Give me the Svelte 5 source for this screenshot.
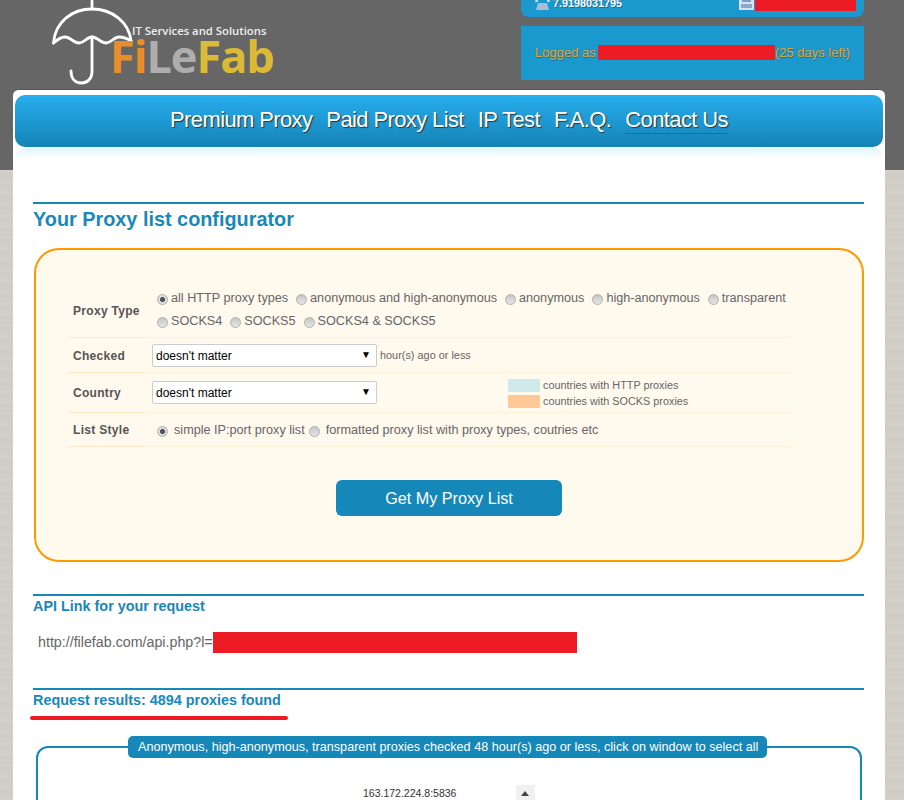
<script>
  const navItems = ['Premium Proxy', 'Paid Proxy List', 'IP Test', 'F.A.Q.', 'Contact Us'];
  const proxyLines = [
    [
      { label: 'all HTTP proxy types', checked: true },
      { label: 'anonymous and high-anonymous' },
      { label: 'anonymous' },
      { label: 'high-anonymous' },
      { label: 'transparent' }
    ],
    [{ label: 'SOCKS4' }, { label: 'SOCKS5' }, { label: 'SOCKS4 & SOCKS5' }]
  ];
</script>

<div class="page">
  <header class="top">
    <div class="logo">
      <svg class="umbrella" width="82" height="86" viewBox="0 0 82 86" fill="none" stroke="#fff" stroke-width="2.8" stroke-linecap="round" stroke-linejoin="round">
        <path d="M40 1v7" />
        <path d="M1.500 43C3 22 20 9 40 9c20 0 37 13 39 32" />
        <path d="M1.500 43C6 39 9 37 13 37c5 0 9 6 14 6 5 0 8-6 13-6 5 0 9 6 14 6 5 0 8-6 13-6 5 0 9 2 12 4" />
        <path d="M40 37v35c0 7-5 11-10.500 11-6 0-10.500-4-10.500-12" />
      </svg>
      <span class="tagline">IT Services and Solutions</span>
      <span class="brand"><span class="o">Fi</span><span class="g">Le</span><span class="y">Fab</span></span>
    </div>
    <div class="side">
      <div class="contact">
        <span class="phone">
          <svg width="15" height="12" viewBox="0 0 15 12"><path d="M1 0h13l1 4h-3V2H3v2H0z" fill="#c9d7ea" /><path d="M3 5h9l2 7H1z" fill="#a9bcd8" /></svg>
          7.9198031795
        </span>
        <span class="mail">
          <svg width="15" height="12" viewBox="0 0 15 12"><rect width="15" height="12" fill="#d5e3f2" /><rect x="3" y="0" width="9" height="4" fill="#7f9cc4" /><rect x="2" y="6" width="11" height="4" fill="#8fa9cc" /></svg>
          <span class="redact mailbar"></span>
        </span>
      </div>
      <div class="logged">Logged as <span class="redact userbar"></span>(25 days left)</div>
    </div>
  </header>

  <main class="sheet">
    <nav>
      {#each navItems as item}
        <a href="#top" class:hover={item === 'Contact Us'}>{item}</a>
      {/each}
    </nav>
    <div class="glow"></div>

    <section class="content">
      <h1>Your Proxy list configurator</h1>

      <form class="config" on:submit|preventDefault>
        <div class="row type">
          <div class="label">Proxy Type</div>
          <div class="field radios">
            {#each proxyLines as line}
              <div class="line">
                {#each line as t}
                  <label><input type="radio" name="type" checked={t.checked} />{t.label}</label>
                {/each}
              </div>
            {/each}
          </div>
        </div>
        <div class="row checked">
          <div class="label">Checked</div>
          <div class="field">
            <span class="select"><select><option>doesn't matter</option></select></span>
            <span class="hint">hour(s) ago or less</span>
          </div>
        </div>
        <div class="row country">
          <div class="label">Country</div>
          <div class="field">
            <span class="select"><select><option>doesn't matter</option></select></span>
            <div class="legend">
              <div><i class="http"></i>countries with HTTP proxies</div>
              <div><i class="socks"></i>countries with SOCKS proxies</div>
            </div>
          </div>
        </div>
        <div class="row style">
          <div class="label">List Style</div>
          <div class="field radios">
            <div class="line tight">
              <label class="wide"><input type="radio" name="style" checked />simple IP:port proxy list</label>
              <label class="wide"><input type="radio" name="style" />formatted proxy list with proxy types, coutries etc</label>
            </div>
          </div>
        </div>
        <button type="submit">Get My Proxy List</button>
      </form>

      <h2 class="api-title">API Link for your request</h2>
      <p class="api">http://filefab.com/api.php?l=<span class="redact apibar"></span></p>

      <h2 class="results">Request results: 4894 proxies found</h2>
      <div class="scribble"></div>

      <fieldset>
        <legend>Anonymous, high-anonymous, transparent proxies checked 48 hour(s) ago or less, click on window to select all</legend>
        <div class="list">
          <span>163.172.224.8:5836</span>
          <div class="scroll-up"></div>
        </div>
      </fieldset>
    </section>
  </main>
</div>

<style>
  :global(body) { margin: 0; background: #fff; }
  .page {
    height: 800px;
    overflow: hidden;
    font-family: "Liberation Sans", Arial, sans-serif;
    color: #666;
    background:
      linear-gradient(#666, #666) top / 100% 170px no-repeat,
      repeating-linear-gradient(0deg, rgba(255,255,255,.05) 0 3px, transparent 3px 7px, rgba(0,0,0,.012) 7px 11px),
      #d0cec6;
  }

  .top { display: flex; justify-content: space-between; height: 89px; padding: 0 40px 0 52px; }
  .logo { position: relative; width: 240px; }
  .umbrella { position: absolute; left: 0; top: 0; }
  .tagline { position: absolute; left: 80px; top: 24px; font-size: 11.3px; line-height: 14px; color: #eee; white-space: nowrap; font-family: "Open Sans", sans-serif; font-weight: 600; }
  .brand { position: absolute; left: 58px; top: 38px; font: 700 45px/36px "Open Sans", sans-serif; letter-spacing: -1px; white-space: nowrap; }
  .o { color: #e78e2b; }
  .g { color: #aeaeae; }
  .y { color: #dbba36; }

  .side { width: 343px; }
  .contact { display: flex; height: 17px; background: #1a99cf; border-radius: 0 0 8px 8px; padding: 0 8px 0 14px; color: #fff; font-size: 10.8px; font-weight: 700; overflow: hidden; text-shadow: 1px 1px 0 rgba(30,60,90,.5); }
  .contact > span { display: flex; align-items: flex-start; gap: 3px; margin-top: -4px; height: 16px; line-height: 14px; }
  .phone { width: 204px; }
  .phone svg, .mail svg { flex: none; margin-top: 2px; }
  .mailbar { display: block; width: 101px; height: 15px; margin-left: -2px; }
  .logged { height: 54px; margin-top: 9px; background: #1a99cf; padding: 0 14px 2px; box-sizing: border-box; font-size: 13px; color: #e2a52e; text-shadow: 1px 1px 0 rgba(60,60,60,.55); white-space: nowrap; display: flex; align-items: center; }
  .redact { background: #ed1c24; }
  .userbar { display: block; width: 180px; height: 15px; margin-left: 2px; }

  .sheet { width: 872px; margin-left: 13px; background: #fff; border-radius: 6px 6px 0 0; padding-top: 5px; border-top: 1px solid #555; box-sizing: border-box; }
  nav {
    display: flex; justify-content: center; gap: 14px;
    width: 868px; height: 52px; margin: 0 2px; box-sizing: border-box;
    padding-top: 12px;
    border-radius: 10px;
    background: linear-gradient(#28aeee, #1483b6);
  }
  nav a { font-size: 22px; line-height: 26px; height: 26px; color: #fff; text-decoration: none; letter-spacing: -.62px; text-shadow: 1px 1px 1px #333; }
  nav a.hover { border-bottom: 1px solid rgba(20,80,120,.5); }
  .glow { height: 11px; margin: 1px 2px 0; border-radius: 10px 10px 0 0; background: linear-gradient(#e0f5fd, #fff); }

  .content { padding: 43px 21px 0 20px; }
  h1 { margin: 0; border-top: 2px solid #1587b8; padding-top: 3px; font-size: 19.85px; line-height: 24px; color: #1a87b9; }
  .config { margin: 17px 0 0 1px; height: 314px; box-sizing: border-box; border: 2px solid #f90; border-radius: 25px; background: #fff9ee; padding: 39px 70px 0 32px; }
  .row { display: flex; font-size: 12px; }
  .label { width: 77px; flex: none; padding-left: 5px; box-sizing: border-box; margin-right: 2px; border-bottom: 1px solid #ffe9c6; font-weight: 700; letter-spacing: .3px; color: #555; display: flex; align-items: center; }
  .type .label { padding-bottom: 4px; }
  .checked .label, .country .label, .style .label { padding-top: 1px; }
  .field { flex: 1; border-bottom: 1px dotted #ffe9c6; display: flex; align-items: center; position: relative; padding-left: 5px; }
  .type { height: 49px; }
  .checked { height: 35px; }
  .country { height: 40px; }
  .style { height: 34px; }
  .radios { flex-direction: column; align-items: flex-start; justify-content: center; gap: 6px; padding-left: 10px; }
  .type .radios { padding-bottom: 6px; }
  .style .radios { padding-top: 1px; }
  .line { display: flex; gap: 8px; white-space: nowrap; }
  .line.tight { gap: 4px; }
  label { font-size: 12.65px; line-height: 17px; display: inline-flex; align-items: center; white-space: nowrap; }
  input[type=radio] {
    appearance: none; width: 11px; height: 11px; margin: 2px 3px 0 0; border-radius: 50%;
    border: 1px solid #b0b0b0; box-sizing: border-box;
    background: linear-gradient(#c6c6c6, #e6e6e6);
  }
  input[type=radio]:checked { background: radial-gradient(circle, #555 0 2.2px, #ddd 2.8px); }
  .wide input { margin-right: 6px; }
  .select { position: relative; display: block; width: 225px; height: 23px; }
  .select::after { content: "▼"; position: absolute; right: 6px; top: 5px; font-size: 10px; color: #000; pointer-events: none; }
  select { appearance: none; width: 100%; height: 100%; background: #fff; border: 1px solid #ccc; border-radius: 2px; padding: 1px 3px 0; font: 12px "Liberation Sans", sans-serif; color: #000; }
  .hint { font-size: 10.9px; margin-left: 3px; }
  .legend { position: absolute; left: 361px; top: 4px; font-size: 10.85px; }
  .legend div { display: flex; align-items: center; height: 16px; }
  .legend i { width: 32px; height: 13px; margin-right: 3px; }
  .http { background: #cfeae8; }
  .socks { background: #ffc896; }
  button { display: block; width: 226px; height: 36px; margin: 33px 0 0 268px; border: 0; border-radius: 6px; background: #1587b8; color: #fff; font: 16.2px "Liberation Sans", sans-serif; }

  h2 { margin: 0; border-top: 2px solid #1587b8; font-size: 14.4px; line-height: 18px; color: #1a87b9; }
  h2.api-title { margin-top: 32px; padding-top: 1px; }
  .api { margin: 17px 0 0 5px; font-size: 14.25px; line-height: 21px; height: 21px; display: flex; }
  .apibar { display: block; width: 364px; height: 21px; }
  h2.results { margin-top: 35px; padding-top: 1px; }
  .scribble { width: 258px; height: 4px; margin: 7px 0 0 -3px; border-radius: 2px; background: #ed1c24; }
  fieldset { margin: 16px 0 0 3px; width: 826px; height: 120px; box-sizing: border-box; border: 2px solid #1587b8; border-radius: 12px; padding: 0; }
  legend { margin: 0 0 0 90px; padding: 0 9px 0 10px; height: 22px; line-height: 22px; border-radius: 5px; background: #1587b8; color: #fff; font-size: 12.64px; white-space: nowrap; }
  .list { display: flex; padding: 28px 0 0 325px; font-size: 10.5px; color: #333; line-height: 14px; }
  .list span { width: 153px; }
  .scroll-up { width: 19px; height: 30px; margin-top: -1px; background: #f1f1f1; position: relative; }
  .scroll-up::after { content: ""; position: absolute; left: 5px; top: 6px; border: 4.5px solid transparent; border-top: 0; border-bottom: 5px solid #444; }
</style>
